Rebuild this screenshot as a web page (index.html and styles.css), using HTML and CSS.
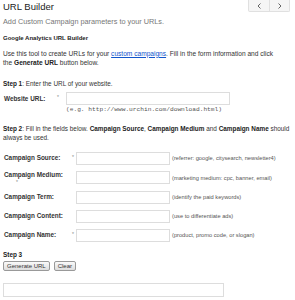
FILE: index.html
```html
<!DOCTYPE html>
<html lang="en">
<head>
    <meta charset="UTF-8">
    <meta name="viewport" content="width=device-width, initial-scale=1.0">
    <title>URL Builder</title>
    <link rel="stylesheet" href="styles.css">
</head>
<body>
    <div class="header">
        <h1>URL Builder</h1>
        <div class="pager">
            <button class="page-btn" aria-label="Previous">
                <svg width="5" height="6" viewBox="0 0 5 6"><polyline points="3.5,0.5 1,3 3.5,5.5" fill="none" stroke="#555" stroke-width="0.9"/></svg>
            </button>
            <button class="page-btn" aria-label="Next">
                <svg width="5" height="6" viewBox="0 0 5 6"><polyline points="1.5,0.5 4,3 1.5,5.5" fill="none" stroke="#555" stroke-width="0.9"/></svg>
            </button>
        </div>
    </div>
    <p class="subtitle">Add Custom Campaign parameters to your URLs.</p>

    <h2>Google Analytics URL Builder</h2>
    <p class="intro">Use this tool to create URLs for your <a href="#">custom campaigns</a>. Fill in the form information and click the <b>Generate URL</b> button below.</p>

    <p class="step step1"><b>Step 1</b>: Enter the URL of your website.</p>
    <div class="form url-form">
        <label class="label" for="url">Website URL:</label>
        <span class="req">*</span>
        <input type="text" id="url" class="url-input">
        <span></span>
        <span></span>
        <span class="example">(e.g. http://www.urchin.com/download.html)</span>
    </div>

    <p class="step step2"><b>Step 2</b>: Fill in the fields below. <b>Campaign Source</b>, <b>Campaign Medium</b> and <b>Campaign Name</b> should always be used.</p>
    <div class="form campaign-form">
        <label class="label" for="source">Campaign Source:</label>
        <span class="req">*</span>
        <div class="field"><input type="text" id="source"><span class="hint">(referrer: google, citysearch, newsletter4)</span></div>

        <label class="label" for="medium">Campaign Medium:<span class="req-below">*</span></label>
        <span></span>
        <div class="field"><input type="text" id="medium"><span class="hint">(marketing medium: cpc, banner, email)</span></div>

        <label class="label" for="term">Campaign Term:</label>
        <span></span>
        <div class="field"><input type="text" id="term"><span class="hint">(identify the paid keywords)</span></div>

        <label class="label" for="content">Campaign Content:</label>
        <span></span>
        <div class="field"><input type="text" id="content"><span class="hint">(use to differentiate ads)</span></div>

        <label class="label" for="name">Campaign Name:</label>
        <span class="req">*</span>
        <div class="field"><input type="text" id="name"><span class="hint">(product, promo code, or slogan)</span></div>
    </div>

    <p class="step step3"><b>Step 3</b></p>
    <div class="actions">
        <button class="btn">Generate URL</button>
        <button class="btn">Clear</button>
    </div>
    <input type="text" class="output" readonly>
</body>
</html>
```

FILE: styles.css
```css
body {
    margin: 0;
    padding: 0 3px;
    font-family: "Liberation Sans", Arial, sans-serif;
    color: #333;
    background-color: #fff;
}
p, h1, h2 {
    margin: 0;
}
.header {
    display: flex;
    justify-content: space-between;
    align-items: flex-start;
}
h1 {
    margin-top: 1px;
    font-size: 9.5px;
    line-height: 12px;
    font-weight: normal;
    color: #222;
}
.pager {
    display: flex;
    margin-right: 2px;
    border: 1px solid #e0e0e0;
    border-top: none;
    border-radius: 0 0 2px 2px;
    background-color: #f5f5f5;
}
.page-btn {
    width: 20px;
    height: 11px;
    padding: 0;
    border: none;
    background: none;
    display: flex;
    align-items: center;
    justify-content: center;
}
.page-btn + .page-btn {
    border-left: 1px solid #e0e0e0;
}
.subtitle {
    margin-top: 4px;
    font-size: 7.3px;
    line-height: 10px;
    color: #777;
}
h2 {
    margin-top: 7px;
    font-size: 6px;
    line-height: 9px;
    font-weight: bold;
    color: #222;
}
.intro, .step {
    font-size: 6.4px;
    line-height: 9px;
}
.intro {
    margin-top: 5.5px;
    max-width: 278px;
    font-size: 6.6px;
}
.intro a {
    color: #15c;
}
.step b, .intro b {
    color: #222;
}
.step1 {
    margin-top: 12px;
}
.step2 {
    margin-top: 10px;
}
.step3 {
    margin-top: 8.5px;
}
.form {
    display: grid;
    align-items: center;
}
.url-form {
    margin-top: 4.5px;
    grid-template-columns: 54px 9px auto;
    row-gap: 1px;
}
.campaign-form {
    margin-top: 9.5px;
    grid-template-columns: 69px 4px auto;
    row-gap: 6px;
}
.label {
    padding-left: 1px;
    font-size: 6.4px;
    line-height: 8px;
    font-weight: bold;
    color: #333;
}
.req {
    font-size: 5px;
    color: #888;
    align-self: start;
    padding-top: 2px;
}
.req-below {
    display: block;
    padding-left: 12px;
    font-size: 5px;
    line-height: 6px;
    font-weight: normal;
    color: #888;
}
input[type="text"] {
    box-sizing: border-box;
    height: 13px;
    margin: 0;
    padding: 0 2px;
    border: 1px solid #ddd;
    background-color: #fff;
    font-size: 6px;
}
.url-input {
    width: 164px;
}
.example {
    font-family: "Liberation Mono", "Courier New", monospace;
    font-size: 6.2px;
    line-height: 8px;
    color: #555;
}
.field {
    display: flex;
    align-items: center;
}
.field input[type="text"] {
    width: 94px;
}
.hint {
    margin-left: 2px;
    font-size: 5.7px;
    color: #555;
}
.actions {
    display: flex;
    gap: 4px;
    margin-top: 1.5px;
}
.btn {
    height: 10px;
    padding: 0 3px;
    border: 1px solid #999;
    border-radius: 2px;
    background: linear-gradient(#fafafa, #ddd);
    font-family: "Liberation Sans", Arial, sans-serif;
    font-size: 6px;
    line-height: 8px;
    color: #333;
}
input.output {
    display: block;
    margin-top: 12px;
    width: 221px;
    height: 14px;
}
```
